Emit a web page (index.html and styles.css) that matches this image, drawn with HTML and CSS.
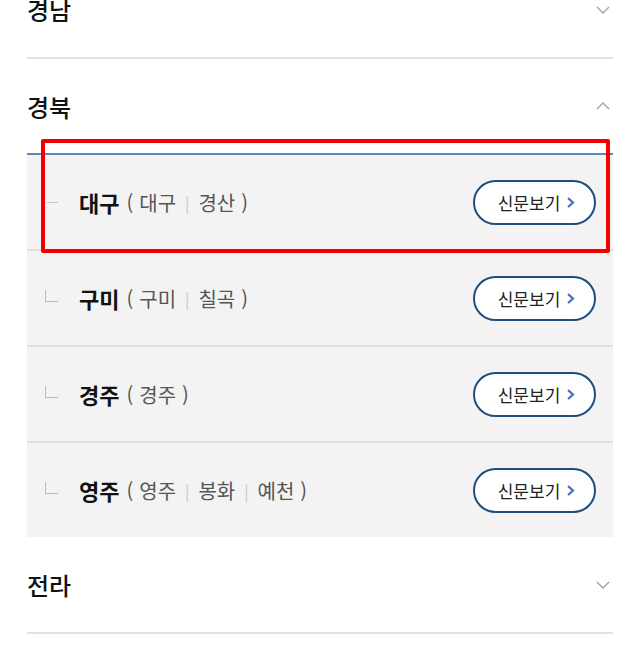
FILE: index.html
```html
<!DOCTYPE html>
<html lang="ko">
<head>
    <meta charset="UTF-8">
    <title>지역 신문보기</title>
    <link rel="stylesheet" href="styles.css">
</head>
<body>
<div class="region-list">

    <!-- 경남 -->
    <div class="region">
        <div class="region-head">
            <span>경남</span>
            <svg class="arrow" width="14" height="8" viewBox="0 0 14 8"><path d="M1 1 L7 7 L13 1" fill="none" stroke="#a0a0a0" stroke-width="1.4"/></svg>
        </div>
    </div>

    <!-- 경북 (open) -->
    <div class="region open">
        <div class="region-head">
            <span>경북</span>
            <svg class="arrow" width="14" height="8" viewBox="0 0 14 8"><path d="M1 7 L7 1 L13 7" fill="none" stroke="#a0a0a0" stroke-width="1.4"/></svg>
        </div>
        <div class="sub-list">
            <div class="highlight"></div>

            <div class="sub-row">
                <span class="tree dash"></span>
                <span class="city">대구</span>
                <span class="towns">(<b>대구</b><i class="sep">|</i><b>경산</b>)</span>
                <a class="paper-btn">신문보기<svg width="9" height="13" viewBox="0 0 9 13"><path d="M2 2 L7 6.5 L2 11" fill="none" stroke="#3f6fc0" stroke-width="2.2"/></svg></a>
            </div>

            <div class="sub-row">
                <span class="tree"></span>
                <span class="city">구미</span>
                <span class="towns">(<b>구미</b><i class="sep">|</i><b>칠곡</b>)</span>
                <a class="paper-btn">신문보기<svg width="9" height="13" viewBox="0 0 9 13"><path d="M2 2 L7 6.5 L2 11" fill="none" stroke="#3f6fc0" stroke-width="2.2"/></svg></a>
            </div>

            <div class="sub-row">
                <span class="tree"></span>
                <span class="city">경주</span>
                <span class="towns">(<b>경주</b>)</span>
                <a class="paper-btn">신문보기<svg width="9" height="13" viewBox="0 0 9 13"><path d="M2 2 L7 6.5 L2 11" fill="none" stroke="#3f6fc0" stroke-width="2.2"/></svg></a>
            </div>

            <div class="sub-row">
                <span class="tree"></span>
                <span class="city">영주</span>
                <span class="towns">(<b>영주</b><i class="sep">|</i><b>봉화</b><i class="sep">|</i><b>예천</b>)</span>
                <a class="paper-btn">신문보기<svg width="9" height="13" viewBox="0 0 9 13"><path d="M2 2 L7 6.5 L2 11" fill="none" stroke="#3f6fc0" stroke-width="2.2"/></svg></a>
            </div>
        </div>
    </div>

    <!-- 전라 -->
    <div class="region">
        <div class="region-head">
            <span>전라</span>
            <svg class="arrow" width="14" height="8" viewBox="0 0 14 8"><path d="M1 1 L7 7 L13 1" fill="none" stroke="#a0a0a0" stroke-width="1.4"/></svg>
        </div>
    </div>

</div>
</body>
</html>
```

FILE: styles.css
```css
body {
    margin: 0;
    background: #fff;
    font-family: "Noto Sans CJK KR", "Noto Sans", sans-serif;
    color: #111;
    overflow: hidden;
}
.region-list {
    margin: -38px 27px 0 27px;
}
.region {
    border-bottom: 2px solid #e2e2e2;
}
.region.open {
    border-bottom: none;
}
.region-head {
    height: 95px;
    display: flex;
    align-items: center;
    justify-content: space-between;
    font-size: 24px;
    font-weight: 500;
    color: #111;
}
.region.open .region-head {
    height: 94px;
}
.arrow {
    margin-right: 3px;
}
.sub-list {
    position: relative;
    background: #f3f3f3;
    border-top: 2px solid #5a86b8;
}
.highlight {
    position: absolute;
    top: -16px;
    left: 14px;
    right: 3px;
    height: 106px;
    border: 4px solid #f20000;
    border-radius: 2px;
    pointer-events: none;
}
.sub-row {
    height: 94px;
    display: flex;
    align-items: center;
    padding: 0 17px 0 18px;
    border-bottom: 2px solid #dedede;
}
.sub-row:last-child {
    border-bottom: none;
}
.tree {
    width: 13px;
    height: 12px;
    margin: -4px 21px 0 0;
    border-left: 1px solid #b8b8b8;
    border-bottom: 1px solid #b8b8b8;
    box-sizing: border-box;
}
.tree.dash {
    border-left: none;
    height: 1px;
    margin-top: 0;
    margin-left: 2px;
    width: 11px;
    margin-right: 21px;
    border-bottom-color: #c4c4c4;
}
.city {
    font-size: 22px;
    font-weight: 700;
    color: #111;
    margin-right: 7px;
}
.towns {
    font-size: 20px;
    color: #555;
    flex: 1;
}
.towns b {
    font-weight: 400;
    margin: 0 6px;
}
.sep {
    font-style: normal;
    color: #c8c8c8;
    font-size: 16px;
    margin: 0 3px;
    position: relative;
    top: -2px;
}
.paper-btn {
    display: flex;
    align-items: center;
    justify-content: center;
    gap: 6px;
    width: 123px;
    height: 45px;
    box-sizing: border-box;
    border: 2px solid #1f4d7c;
    border-radius: 23px;
    background: #fff;
    font-size: 17px;
    color: #222;
    padding-left: 4px;
}
```
